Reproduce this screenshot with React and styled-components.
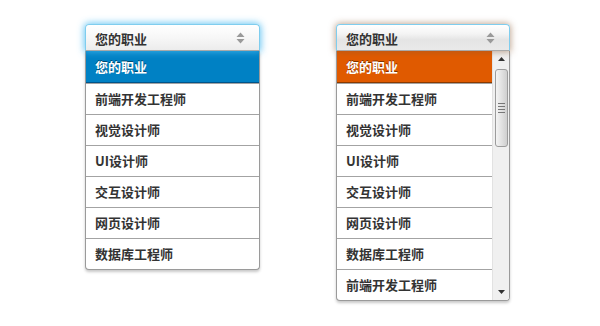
import React from 'react';
import styled, {createGlobalStyle, css} from 'styled-components';

const GlobalStyle = createGlobalStyle`
   html, body {
      margin: 0;
      padding: 0;
      background: #ffffff;
   }
   body {
      font-family: "Noto Sans CJK SC", "Liberation Sans", sans-serif;
   }
`;

const Page = styled.div`
   display: flex;
   align-items: flex-start;
   gap: 76px;
   padding: 24px 0 0 85px;
   width: 600px;
   height: 326px;
   box-sizing: border-box;
`;

const Select = styled.div`
   display: flex;
   flex-direction: column;
   width: ${props => props.width}px;
`;

const Header = styled.div`
   display: flex;
   align-items: center;
   justify-content: space-between;
   height: 27px;
   box-sizing: border-box;
   padding: 1px 14px 0 9px;
   border: 1px solid #7fcdee;
   border-bottom-color: #a9a9a9;
   border-radius: 4px 4px 0 0;
   font-size: 13px;
   font-weight: bold;
   color: #333333;
   position: relative;
   z-index: 1;
   ${props => props.theme_kind === 'orange' ? css`
      background: linear-gradient(#ffffff 0%, #f4f4f4 35%, #e4e4e4 60%, #e9e9e9 100%);
      box-shadow: 0 0 6px 1px rgba(140, 90, 50, 0.5);
   ` : css`
      background: linear-gradient(#ffffff 0%, #f7f7f7 50%, #ececec 100%);
      box-shadow: 0 0 7px 1px rgba(70, 185, 240, 0.8);
   `}
`;

const List = styled.div`
   display: flex;
   border: 1px solid #9a9a9a;
   border-top: none;
   border-radius: 0 0 4px 4px;
   background: #ffffff;
   box-shadow: 0 2px 3px rgba(0, 0, 0, 0.22);
   overflow: hidden;
`;

const Options = styled.div`
   flex: 1;
   display: flex;
   flex-direction: column;
`;

const Option = styled.div`
   height: 30px;
   line-height: 30px;
   padding-left: 9px;
   font-size: 13px;
   font-weight: bold;
   color: #333333;
   border-top: 1px solid #a3a3a3;
   &:first-child {
      border-top: none;
   }
   ${props => props.selected && css`
      color: #ffffff;
      text-shadow: 0 -1px 0 rgba(0, 0, 0, 0.45);
      background: ${props.color};
      border-bottom: 1px solid ${props.edge};
      height: 31px;
      line-height: 31px;
   `}
`;

const ScrollTrack = styled.div`
   width: 16px;
   background: #f0f0f0;
   border-left: 1px solid #e2e2e2;
   display: flex;
   flex-direction: column;
   align-items: center;
`;

const ScrollArrow = styled.div`
   height: 16px;
   width: 100%;
   display: flex;
   align-items: center;
   justify-content: center;
`;

const Thumb = styled.div`
   width: 13px;
   height: 78px;
   box-sizing: border-box;
   margin-top: 2px;
   border: 1px solid #9c9c9c;
   border-radius: 3px;
   background: linear-gradient(90deg, #f4f4f4 0%, #e2e2e2 50%, #cfcfcf 100%);
   display: flex;
   flex-direction: column;
   align-items: center;
   justify-content: center;
   gap: 2px;
`;

const Grip = styled.div`
   width: 7px;
   height: 1px;
   background: #777777;
`;

const Spacer = styled.div`
   flex: 1;
`;

const UpDown = () => (
   <svg width="9" height="12" viewBox="0 0 9 12">
      <polygon points="0.5,5 4.5,0.5 8.5,5" fill="#9a9a9a"/>
      <polygon points="0.5,7 4.5,11.5 8.5,7" fill="#9a9a9a"/>
   </svg>
);

const Tri = ({down}) => (
   <svg width="7" height="4" viewBox="0 0 7 4">
      <polygon points={down ? "0,0 7,0 3.5,4" : "0,4 7,4 3.5,0"} fill="#333333"/>
   </svg>
);

const left_items = ['前端开发工程师', '视觉设计师', 'UI设计师', '交互设计师', '网页设计师', '数据库工程师'];
const right_items = [...left_items, '前端开发工程师'];

const Dropdown = ({width, kind, color, edge, items, scroll}) => (
   <Select width={width}>
      <Header theme_kind={kind}>
         <span>您的职业</span>
         <UpDown/>
      </Header>
      <List>
         <Options>
            <Option selected color={color} edge={edge}>您的职业</Option>
            {items.map((item, i) => <Option key={`opt ${i}`}>{item}</Option>)}
         </Options>
         {scroll && <ScrollTrack>
            <ScrollArrow><Tri/></ScrollArrow>
            <Thumb><Grip/><Grip/><Grip/><Grip/></Thumb>
            <Spacer/>
            <ScrollArrow><Tri down/></ScrollArrow>
         </ScrollTrack>}
      </List>
   </Select>
);

export default function App() {
   return <>
      <GlobalStyle/>
      <Page>
         <Dropdown width={175} kind="blue" color="#0081c4" edge="#00548a" items={left_items}/>
         <Dropdown width={174} kind="orange" color="#e05a00" edge="#8a3a00" items={right_items} scroll/>
      </Page>
   </>;
}
